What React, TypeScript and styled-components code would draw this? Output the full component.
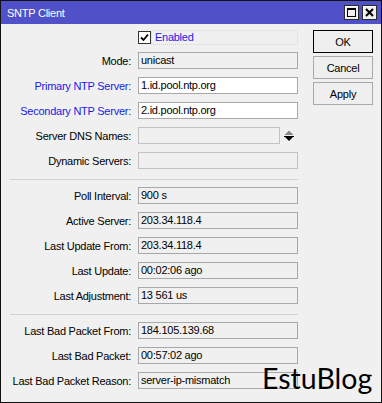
import React from "react";
import styled, { createGlobalStyle } from "styled-components";

const GlobalStyle = createGlobalStyle`
  html, body {
    margin: 0;
    padding: 0;
    background: #ffffff;
  }
  body {
    font-family: "Liberation Sans", Arial, sans-serif;
    font-size: 11px;
    letter-spacing: -0.25px;
  }
`;

const Screen = styled.div`
  position: relative;
  width: 382px;
  height: 403px;
`;

const Window = styled.div`
  box-sizing: border-box;
  width: 382px;
  height: 403px;
  border: 1px solid #111;
  background: #f0f0f0;
  display: flex;
  flex-direction: column;
`;

const TitleBar = styled.div`
  height: 23px;
  flex-shrink: 0;
  background: #5051c8;
  color: #fff;
  display: flex;
  align-items: center;
  justify-content: space-between;
  padding: 0 4px 0 6px;
  font-size: 11px;
`;

const TitleButtons = styled.div`
  display: flex;
  gap: 3px;
`;

const TitleButton = styled.div`
  box-sizing: border-box;
  width: 15px;
  height: 15px;
  border: 1px solid #2a2a2a;
  background: #f0f0f0;
  box-shadow: inset 1px 1px #fff;
  display: flex;
  align-items: center;
  justify-content: center;
`;

const Body = styled.div`
  display: flex;
  gap: 15px;
  padding: 5px 8px 0 9px;
`;

const Form = styled.div`
  width: 288px;
  display: flex;
  flex-direction: column;
`;

const Section = styled.div`
  display: flex;
  flex-direction: column;
  gap: 8px;
`;

const Row = styled.div<{ $gapAfter?: number }>`
  display: grid;
  grid-template-columns: 121px 160px;
  column-gap: 7px;
  align-items: center;
  height: 17px;
  margin-bottom: ${(p) => (p.$gapAfter !== undefined ? `${p.$gapAfter}px` : "0")};
`;

const Label = styled.div<{ $blue?: boolean }>`
  text-align: right;
  white-space: nowrap;
  color: ${(p) => (p.$blue ? "#1a1ae6" : "#000")};
`;

const Field = styled.div<{ $variant?: "edit" | "ro" | "disabled"; $width?: number }>`
  box-sizing: border-box;
  height: 17px;
  width: ${(p) => (p.$width ? `${p.$width}px` : "160px")};
  padding: 0 2px;
  line-height: 15px;
  white-space: nowrap;
  overflow: hidden;
  color: #000;
  border: 1px solid
    ${(p) => (p.$variant === "disabled" ? "#c2c2c2" : "#a8a8a8")};
  background: ${(p) => (p.$variant === "edit" ? "#ffffff" : "#f0f0f0")};
`;

const FieldWithSpin = styled.div`
  display: flex;
  align-items: center;
  gap: 4px;
`;

const CheckCell = styled.div`
  grid-column: 2;
  display: flex;
  align-items: center;
`;

const CheckBox = styled.div`
  box-sizing: border-box;
  width: 13px;
  height: 13px;
  border: 1px solid #333;
  background: #fff;
  display: flex;
  align-items: center;
  justify-content: center;
`;

const CheckLabel = styled.div`
  box-sizing: border-box;
  width: 148px;
  height: 15px;
  padding-left: 3px;
  line-height: 13px;
  color: #1a1ae6;
  border: 1px dotted #222;
  background: #f0f0f0;
  outline: 1px dotted #e8e07a;
  outline-offset: -1px;
`;

const Divider = styled.div`
  height: 1px;
  background: #d2d2d2;
  margin: 10px 0 7px;
`;

const ButtonColumn = styled.div`
  width: 60px;
  display: flex;
  flex-direction: column;
  gap: 3px;
  padding-top: 1px;
`;

const Button = styled.div<{ $default?: boolean }>`
  box-sizing: border-box;
  height: 23px;
  display: flex;
  align-items: center;
  justify-content: center;
  background: #efefef;
  border: 1px solid ${(p) => (p.$default ? "#000" : "#a9a9a9")};
  color: #000;
`;

const Watermark = styled.div`
  position: absolute;
  left: 262px;
  top: 360px;
  font-family: Lato, "Open Sans", sans-serif;
  font-size: 28.5px;
  letter-spacing: 0;
  color: #000;
  line-height: 36px;
`;

const Spinner = () => (
  <svg width="10" height="12" viewBox="0 0 10 12">
    <polygon points="0.5,5 5,0.5 9.5,5" fill="#8a8a8a" />
    <rect x="0" y="6" width="10" height="1" fill="#000" />
    <polygon points="1,7 9,7 5,11" fill="#000" />
  </svg>
);

type Item = { label: string; value: string; blue?: boolean; variant?: "edit" | "ro" | "disabled" };

const status: Item[] = [
  { label: "Poll Interval:", value: "900 s" },
  { label: "Active Server:", value: "203.34.118.4" },
  { label: "Last Update From:", value: "203.34.118.4" },
  { label: "Last Update:", value: "00:02:06 ago" },
  { label: "Last Adjustment:", value: "13 561 us" },
];

const bad: Item[] = [
  { label: "Last Bad Packet From:", value: "184.105.139.68" },
  { label: "Last Bad Packet:", value: "00:57:02 ago" },
  { label: "Last Bad Packet Reason:", value: "server-ip-mismatch" },
];

const FieldRow = ({ item }: { item: Item }) => (
  <Row>
    <Label $blue={item.blue}>{item.label}</Label>
    <Field $variant={item.variant || "ro"}>{item.value}</Field>
  </Row>
);

export default function App() {
  return (
    <Screen>
      <GlobalStyle />
      <Window>
        <TitleBar>
          <span>SNTP Client</span>
          <TitleButtons>
            <TitleButton>
              <svg width="9" height="9" viewBox="0 0 9 9">
                <rect x="0.5" y="0.5" width="8" height="8" fill="none" stroke="#000" />
                <rect x="0" y="0" width="9" height="2" fill="#000" />
              </svg>
            </TitleButton>
            <TitleButton>
              <svg width="9" height="9" viewBox="0 0 9 9">
                <path d="M1 1 L8 8 M8 1 L1 8" stroke="#000" strokeWidth="2" />
              </svg>
            </TitleButton>
          </TitleButtons>
        </TitleBar>
        <Body>
          <Form>
            <Section>
              <Row $gapAfter={-2}>
                <CheckCell>
                  <CheckBox>
                    <svg width="9" height="9" viewBox="0 0 9 9">
                      <path d="M1 4.5 L3.5 7 L8 1.5" fill="none" stroke="#000" strokeWidth="1.8" />
                    </svg>
                  </CheckBox>
                  <CheckLabel>Enabled</CheckLabel>
                </CheckCell>
              </Row>
              <FieldRow item={{ label: "Mode:", value: "unicast" }} />
              <FieldRow item={{ label: "Primary NTP Server:", value: "1.id.pool.ntp.org", blue: true, variant: "edit" }} />
              <FieldRow item={{ label: "Secondary NTP Server:", value: "2.id.pool.ntp.org", blue: true, variant: "edit" }} />
              <Row>
                <Label>Server DNS Names:</Label>
                <FieldWithSpin>
                  <Field $variant="disabled" $width={142} />
                  <Spinner />
                </FieldWithSpin>
              </Row>
              <FieldRow item={{ label: "Dynamic Servers:", value: "", variant: "disabled" }} />
            </Section>
            <Divider />
            <Section>
              {status.map((s) => (
                <FieldRow key={s.label} item={s} />
              ))}
            </Section>
            <Divider />
            <Section>
              {bad.map((s) => (
                <FieldRow key={s.label} item={s} />
              ))}
            </Section>
          </Form>
          <ButtonColumn>
            <Button $default>OK</Button>
            <Button>Cancel</Button>
            <Button>Apply</Button>
          </ButtonColumn>
        </Body>
      </Window>
      <Watermark>EstuBlog</Watermark>
    </Screen>
  );
}
